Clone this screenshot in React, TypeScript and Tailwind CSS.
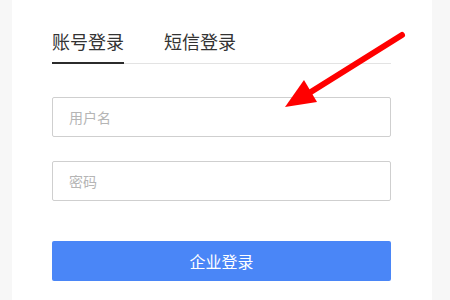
import { useState } from 'react'

const font = { fontFamily: '"Noto Sans CJK SC", "Noto Sans", sans-serif' }

export default function App() {
  const [tab, setTab] = useState<'account' | 'sms'>('account')

  return (
    <div className="relative w-[450px] h-[300px] overflow-hidden bg-[#f7f7f7] flex" style={font}>
      <div className="ml-[12px] w-[420px] h-full bg-white pl-[40px] pr-[41px] pt-[29px]">
        <div className="flex items-start gap-[40px] border-b border-[#e3e3e3]">
          {(['account', 'sms'] as const).map((t) => (
            <button
              key={t}
              type="button"
              onClick={() => setTab(t)}
              className={
                t === tab
                  ? 'text-[18px] leading-[24px] text-[#333] pb-[9px] border-b-2 border-[#2b2b2b] -mb-px'
                  : 'text-[18px] leading-[24px] text-[#333] pb-[9px]'
              }
            >
              {t === 'account' ? '账号登录' : '短信登录'}
            </button>
          ))}
        </div>

        <div className="mt-[33px] flex flex-col gap-[24px]">
          <input
            placeholder="用户名"
            className="h-[40px] w-full rounded-[2px] border border-[#cfcfcf] pl-[16px] text-[14px] text-[#333] outline-none placeholder:text-[#b5b5b5]"
          />
          <input
            type="password"
            placeholder="密码"
            className="h-[40px] w-full rounded-[2px] border border-[#cfcfcf] pl-[16px] text-[14px] text-[#333] outline-none placeholder:text-[#b5b5b5]"
          />
        </div>

        <button
          type="button"
          className="mt-[40px] h-[40px] w-full rounded-[2px] bg-[#4a86f7] text-[16px] text-white"
        >
          企业登录
        </button>
      </div>

      {/* annotation arrow */}
      <svg className="absolute left-0 top-0 pointer-events-none" width="450" height="300" viewBox="0 0 450 300">
        <line x1="402" y1="35" x2="306" y2="95" stroke="#ff0000" strokeWidth="6" strokeLinecap="round" />
        <polygon points="285,107 304,80 317,102" fill="#ff0000" />
      </svg>
    </div>
  )
}
